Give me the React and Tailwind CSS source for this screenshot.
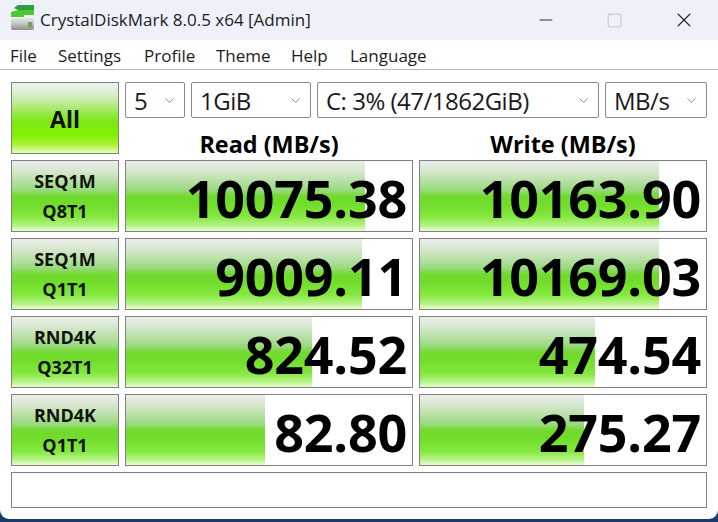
import { ChevronDown, Minus, Square, X } from 'lucide-react';

const rows = [
  { top: 'SEQ1M', bottom: 'Q8T1', read: '10075.38', readBar: 239, write: '10163.90', writeBar: 239 },
  { top: 'SEQ1M', bottom: 'Q1T1', read: '9009.11', readBar: 236, write: '10169.03', writeBar: 239 },
  { top: 'RND4K', bottom: 'Q32T1', read: '824.52', readBar: 186, write: '474.54', writeBar: 175 },
  { top: 'RND4K', bottom: 'Q1T1', read: '82.80', readBar: 139, write: '275.27', writeBar: 164 },
];

const menus = [
  { label: 'File', w: 'w-[48px]' },
  { label: 'Settings', w: 'w-[86px]' },
  { label: 'Profile', w: 'w-[72px]' },
  { label: 'Theme', w: 'w-[75px]' },
  { label: 'Help', w: 'w-[59px]' },
  { label: 'Language', w: 'w-[90px]' },
];

const barGradient =
  'bg-[linear-gradient(to_bottom,#eaeeea_0%,#dde9d8_10%,#c0e2b0_25%,#97d97c_42%,#72da2e_50%,#70dc2a_60%,#84e83e_80%,#b4f284_92%,#e8fcd0_100%)]';

function Combo({ value, width }) {
  return (
    <div className={`${width} h-9 flex items-center justify-between bg-white border border-[#8a8a8a] rounded-[2px] pl-[8px] pr-[7px]`}>
      <span className="text-[24px] tracking-[-0.5px] leading-none text-[#1a1a1a] pt-[1px]">{value}</span>
      <ChevronDown size={15} strokeWidth={1.2} className="text-[#666666]" />
    </div>
  );
}

function Score({ value, bar }) {
  return (
    <div className="relative h-[72px] flex-1 border border-[#808080] bg-white overflow-hidden">
      <div className={`absolute inset-y-0 left-0 ${barGradient}`} style={{ width: bar }} />
      <div className="relative h-full flex items-center justify-end pr-[5px] pt-[4px] text-[52px] font-bold leading-none tracking-[-0.2px] text-black">
        {value}
      </div>
    </div>
  );
}

function DriveIcon() {
  return (
    <svg width="26" height="26" viewBox="0 0 26 26" className="shrink-0 mb-1">
      <defs>
        <linearGradient id="driveBody" x1="0" y1="0" x2="0" y2="1">
          <stop offset="0" stopColor="#e4e6e4" />
          <stop offset="0.45" stopColor="#c4c8c4" />
          <stop offset="1" stopColor="#8a908c" />
        </linearGradient>
      </defs>
      <rect x="1" y="13" width="23" height="12" rx="2" fill="url(#driveBody)" />
      <rect x="18" y="17" width="4" height="5" fill="#7c9a58" />
      <path d="M1 7 L8 5 L24 5 L24 10 L14 10 L14 12 L1 12 Z" fill="#4ec82e" />
      <path d="M4 3 L8 0 L24 0 L24 5 L8 5 Z" fill="#2f9e3e" />
    </svg>
  );
}

export default function App() {
  return (
    <div className="w-[718px] h-[522px] overflow-hidden bg-[#1d3a6e] font-['Open_Sans','Noto_Sans',sans-serif]">
      <div className="h-[519px] bg-white rounded-b-[9px] overflow-hidden">
        {/* title bar */}
        <div className="h-10 bg-[#eef1f9] flex items-center pl-[10px]">
          <DriveIcon />
          <span className="ml-1 text-[17px] text-[#1c1c1c]">CrystalDiskMark 8.0.5 x64 [Admin]</span>
          <div className="ml-auto flex items-center">
            <Minus size={20} strokeWidth={1.1} className="text-[#222222] mr-[50px]" />
            <Square size={17} strokeWidth={1.1} className="text-[#b8b8b8] mr-[49px]" />
            <X size={24} strokeWidth={1.1} className="text-[#222222] mr-[22px]" />
          </div>
        </div>

        {/* menu */}
        <div className="h-[30px] flex items-center pl-[10px] pt-[2px] border-b border-[#b8b8b8] text-[17px] text-[#1c1c1c]">
          {menus.map((m) => (
            <span key={m.label} className={m.w}>{m.label}</span>
          ))}
        </div>

        <div className="pt-3 pl-[11px] w-[707px] flex flex-col gap-1.5">
          {/* controls + column heads */}
          <div className="flex gap-1.5 h-[72px]">
            <div className="w-[108px] h-[72px] flex items-center justify-center pt-[2px] border border-[#808080] text-[23px] font-bold text-[#111111] bg-[linear-gradient(to_bottom,#eef2ec_0%,#dcefd0_15%,#b4ea84_32%,#92e840_45%,#7ee818_55%,#82f000_75%,#a8f238_88%,#e8fdbc_100%)]">
              All
            </div>
            <div className="flex-1 flex flex-col">
              <div className="flex gap-1.5">
                <Combo value="5" width="w-[60px]" />
                <Combo value="1GiB" width="w-[120px]" />
                <Combo value="C: 3% (47/1862GiB)" width="w-[282px]" />
                <Combo value="MB/s" width="w-[102px]" />
              </div>
              <div className="flex-1 flex gap-1.5 pt-[15px] text-[23.4px] font-bold text-black items-center">
                <div className="flex-1 text-center leading-none">Read (MB/s)</div>
                <div className="flex-1 text-center leading-none">Write (MB/s)</div>
              </div>
            </div>
          </div>

          {/* result rows */}
          {rows.map((r) => (
            <div key={r.top + r.bottom} className="flex gap-1.5">
              <div className={`w-[108px] h-[72px] flex flex-col items-center justify-center gap-[5px] border border-[#808080] text-[18px] font-bold leading-[25px] text-[#111111] ${barGradient}`}>
                <span>{r.top}</span>
                <span>{r.bottom}</span>
              </div>
              <div className="flex-1 flex gap-1.5">
                <Score value={r.read} bar={r.readBar} />
                <Score value={r.write} bar={r.writeBar} />
              </div>
            </div>
          ))}

          {/* comment box */}
          <div className="h-9 border border-[#808080] bg-white" />
        </div>
      </div>
    </div>
  );
}
